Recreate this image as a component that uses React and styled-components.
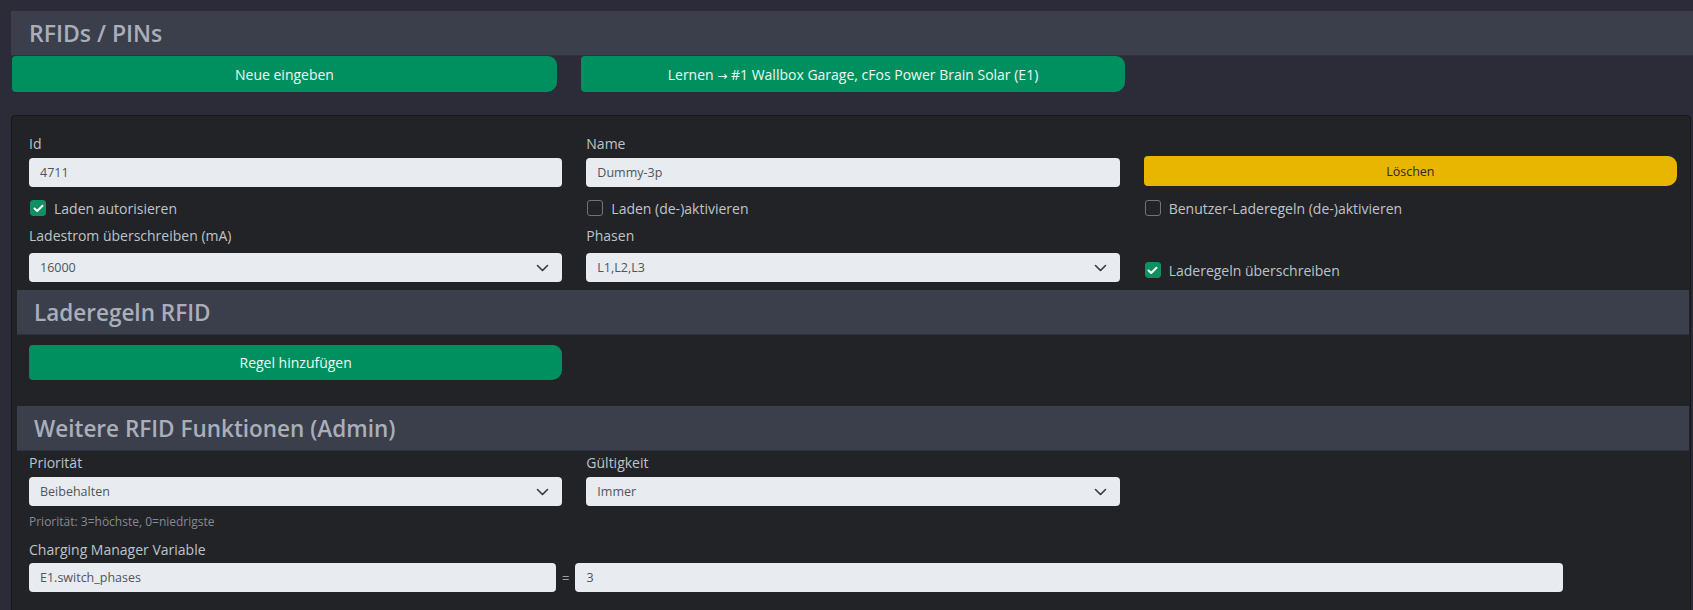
import React from 'react'
import styled, { createGlobalStyle } from 'styled-components'

const GlobalStyle = createGlobalStyle`
    html, body {
        margin: 0;
        padding: 0;
        background: #2b2c37;
        font-family: "Open Sans", "Noto Sans", sans-serif;
        overflow: hidden;
    }
`

const Page = styled.div`
    padding: 11px 0 0 11px;
    width: 1682px;
`

const PageTitle = styled.h2`
    margin: 0;
    height: 44px;
    display: flex;
    align-items: center;
    padding-left: 18px;
    background: #3b3f4b;
    border-bottom: 1px solid #30333d;
    color: #a9afba;
    font-size: 23px;
    font-weight: 600;
`

const ButtonRow = styled.div`
    display: flex;
    gap: 24px;
    padding-left: 1px;
`

const Button = styled.button`
    border: 0;
    height: ${p => p.$height || 36}px;
    width: ${p => p.$width ? p.$width + 'px' : '100%'};
    border-radius: 4px 9px 10px 4px;
    background: ${p => p.$warning ? '#e8b500' : '#00905f'};
    color: ${p => p.$warning ? '#2a2a2a' : '#eef8f3'};
    font-family: inherit;
    font-size: ${p => p.$warning ? 12.5 : 14}px;
    padding: 0;
    cursor: pointer;
`

const Arrow = styled.span`
    font-family: "DejaVu Sans", sans-serif;
    font-size: 12px;
`

const Panel = styled.div`
    margin-top: 23px;
    margin-right: 2px;
    background: #212327;
    border: 1px solid #17181c;
    border-radius: 4px;
    padding: 18px 1px 0 5px;
    height: 500px;
`

const Grid = styled.div`
    display: grid;
    grid-template-columns: 1fr 1fr 1fr;
    column-gap: 24px;
    padding: 0 12px;
    margin-top: ${p => p.$top ?? 0}px;
`

const Field = styled.div`
    display: flex;
    flex-direction: column;
    justify-content: ${p => p.$end ? 'flex-end' : 'flex-start'};
    margin-top: ${p => p.$top ?? 0}px;
`

const Label = styled.label`
    color: #bfc3c9;
    font-size: 14px;
    line-height: 20px;
    margin-bottom: ${p => p.$gap ?? 4}px;
`

const Input = styled.div`
    height: 29px;
    box-sizing: border-box;
    background: #e8ebef;
    border-radius: 4px;
    display: flex;
    align-items: center;
    justify-content: space-between;
    padding: 0 13px 0 11px;
    color: #50545a;
    font-size: 12.5px;
`

const CheckRow = styled.div`
    display: flex;
    align-items: center;
    gap: 8px;
    height: 22px;
    color: #bfc3c9;
    font-size: 14px;
    align-self: ${p => p.$end ? 'end' : 'auto'};
    margin-top: ${p => p.$top ?? 0}px;
    margin-bottom: ${p => p.$end ? 1 : 0}px;
`

const Box = styled.span`
    width: 16px;
    height: 16px;
    box-sizing: border-box;
    border-radius: 3px;
    display: inline-flex;
    align-items: center;
    justify-content: center;
    background: ${p => p.$on ? '#0f8f62' : 'transparent'};
    border: 1px solid ${p => p.$on ? '#0f8f62' : '#6f747c'};
    margin-left: 1px;
`

const SubTitle = styled.h3`
    margin: ${p => p.$top}px 0 0;
    height: 45px;
    display: flex;
    align-items: center;
    padding-left: 17px;
    background: #3b3f4b;
    border-bottom: 1px solid #30333d;
    box-sizing: border-box;
    color: #a9afba;
    font-size: 22.5px;
    font-weight: 600;
`

const Hint = styled.div`
    color: #868b93;
    font-size: 12px;
    line-height: 18px;
    margin-top: 7px;
`

const VarRow = styled.div`
    display: grid;
    grid-template-columns: 527px min-content 988px;
    justify-content: start;
    column-gap: 6px;
    align-items: center;
    padding: 0 12px;
    color: #9aa0a8;
    font-size: 13px;
`

function Check({ on, children, ...rest }) {
    return (
        <CheckRow {...rest}>
            <Box $on={on}>
                {on && (
                    <svg width="11" height="9" viewBox="0 0 11 9">
                        <path d="M1.5 4.5 L4.2 7 L9.5 1.8" stroke="#fff" strokeWidth="2" fill="none" strokeLinecap="round" strokeLinejoin="round" />
                    </svg>
                )}
            </Box>
            {children}
        </CheckRow>
    )
}

function Select({ value }) {
    return (
        <Input>
            {value}
            <svg width="13" height="8" viewBox="0 0 13 8">
                <path d="M1.5 1.5 L6.5 6.5 L11.5 1.5" stroke="#343a40" strokeWidth="1.6" fill="none" strokeLinecap="round" strokeLinejoin="round" />
            </svg>
        </Input>
    )
}

function App() {
    return (
        <Page>
            <GlobalStyle />
            <PageTitle>RFIDs / PINs</PageTitle>
            <ButtonRow>
                <Button $width={545}>Neue eingeben</Button>
                <Button $width={544}>
                    Lernen <Arrow>→</Arrow> #1 Wallbox Garage, cFos Power Brain Solar (E1)
                </Button>
            </ButtonRow>

            <Panel>
                <Grid>
                    <Field>
                        <Label>Id</Label>
                        <Input>4711</Input>
                    </Field>
                    <Field>
                        <Label>Name</Label>
                        <Input>Dummy-3p</Input>
                    </Field>
                    <Field $end>
                        <Button $warning $height={30} style={{ marginBottom: 1 }}>Löschen</Button>
                    </Field>

                    <Check on $top={10}>Laden autorisieren</Check>
                    <Check $top={10}>Laden (de-)aktivieren</Check>
                    <Check $top={10}>Benutzer-Laderegeln (de-)aktivieren</Check>

                    <Field $top={7}>
                        <Label $gap={7}>Ladestrom überschreiben (mA)</Label>
                        <Select value="16000" />
                    </Field>
                    <Field $top={7}>
                        <Label $gap={7}>Phasen</Label>
                        <Select value="L1,L2,L3" />
                    </Field>
                    <Check on $end>Laderegeln überschreiben</Check>
                </Grid>

                <SubTitle $top={8}>Laderegeln RFID</SubTitle>
                <Grid $top={10}>
                    <Button $height={35}>Regel hinzufügen</Button>
                </Grid>

                <SubTitle $top={26}>Weitere RFID Funktionen (Admin)</SubTitle>
                <Grid $top={2}>
                    <Field>
                        <Label>Priorität</Label>
                        <Select value="Beibehalten" />
                        <Hint>Priorität: 3=höchste, 0=niedrigste</Hint>
                    </Field>
                    <Field>
                        <Label>Gültigkeit</Label>
                        <Select value="Immer" />
                    </Field>
                </Grid>
                <Grid $top={9}>
                    <Label $gap={3}>Charging Manager Variable</Label>
                </Grid>
                <VarRow>
                    <Input>E1.switch_phases</Input>
                    <span>=</span>
                    <Input>3</Input>
                </VarRow>
            </Panel>
        </Page>
    )
}

export default App
